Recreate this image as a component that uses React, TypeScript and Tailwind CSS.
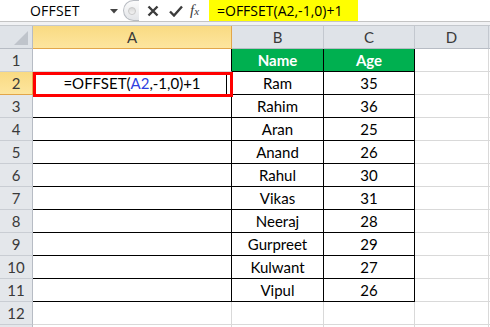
import React from "react";

type Row = { n: number; b?: string; c?: string; head?: boolean };

const rows: Row[] = [
  { n: 1, b: "Name", c: "Age", head: true },
  { n: 2, b: "Ram", c: "35" },
  { n: 3, b: "Rahim", c: "36" },
  { n: 4, b: "Aran", c: "25" },
  { n: 5, b: "Anand", c: "26" },
  { n: 6, b: "Rahul", c: "30" },
  { n: 7, b: "Vikas", c: "31" },
  { n: 8, b: "Neeraj", c: "28" },
  { n: 9, b: "Gurpreet", c: "29" },
  { n: 10, b: "Kulwant", c: "27" },
  { n: 11, b: "Vipul", c: "26" },
  { n: 12 },
  { n: 13 },
];

const hdr =
  "flex items-center justify-center h-[23px] border-r border-b border-r-[#c3c8cf] border-b-[#b7bcc4] bg-[#dfe3e8] text-[#3a3a3a] text-[15px]";
const hdrSel =
  "flex items-center justify-center h-[23px] border-r border-b border-r-[#e2a64a] border-b-[#e2a64a] bg-gradient-to-b from-[#f9da82] to-[#fde59e] text-[#3a3a3a] text-[15px]";

export default function App() {
  return (
    <div className="relative w-[490px] h-[327px] overflow-hidden bg-white font-['Lato',sans-serif] text-black">
      {/* formula bar */}
      <div className="flex h-[22px] border-b border-[#c4c4c4] font-['Open_Sans',sans-serif]">
        <div className="w-[123px] flex items-center pl-[30px] pr-[5px] text-[14px] text-black">
          <span className="flex-1 tracking-[0.2px]">OFFSET</span>
          <svg width="8" height="5" viewBox="0 0 8 5" className="mt-[2px]">
            <path d="M0 0 L8 0 L4 4.5 Z" fill="#444" />
          </svg>
        </div>
        <div className="w-[16px] h-[21px] rounded-l-full border border-r-0 border-[#b8bcc2] bg-gradient-to-b from-[#fbfbfb] to-[#e3e5e8] flex items-center justify-center">
          <div className="w-[8px] h-[8px] rounded-full bg-gradient-to-b from-[#d8d8d8] to-[#f4f4f4] border border-[#c8c8c8]" />
        </div>
        <div className="w-[70px] flex items-center">
          <svg width="12" height="12" viewBox="0 0 12 12" className="ml-[8px]">
            <path d="M1.5 1.5 L10.5 10.5 M10.5 1.5 L1.5 10.5" stroke="#3c3c3c" strokeWidth="2.4" strokeLinecap="butt" />
          </svg>
          <svg width="14" height="12" viewBox="0 0 14 12" className="ml-[10px]">
            <path d="M1 6.5 L5 10.5 L13 1.5" stroke="#3c3c3c" strokeWidth="2.4" fill="none" />
          </svg>
          <span className="ml-[7px] font-['Liberation_Serif',serif] italic text-[15px] text-[#3c3c3c] leading-none">
            f<span className="text-[11px]">x</span>
          </span>
        </div>
        <div className="w-[149px] bg-[#ffff00] flex items-center pl-[8px] text-[14px] text-black">
          =OFFSET(A2,-1,0)+1
        </div>
        <div className="flex-1" />
      </div>
      <div className="h-[4px] bg-[#f1f2f4] border-b border-[#c4c8cd]" />

      {/* grid */}
      <div className="relative grid grid-cols-[33px_199px_92px_91px_74px_1fr]">
        {/* column headers */}
        <div className="relative h-[23px] border-r border-b border-[#b7bcc4] bg-[#dfe3e8]">
          <svg width="14" height="14" viewBox="0 0 14 14" className="absolute right-[4px] bottom-[3px]">
            <path d="M14 0 L14 14 L0 14 Z" fill="#bfc4cb" />
          </svg>
        </div>
        <div className={hdrSel}>A</div>
        <div className={hdr}>B</div>
        <div className={hdr}>C</div>
        <div className={hdr}>D</div>
        <div className="h-[23px] border-b border-[#b7bcc4] bg-[#dfe3e8]" />

        {rows.map((r) => {
          const inTable = r.n <= 11;
          const aBottomBlack = r.n >= 2 && r.n <= 11;
          return (
            <React.Fragment key={r.n}>
              <div
                className={
                  r.n === 2
                    ? "flex items-center justify-center h-[23px] border-r border-b border-r-[#e2a64a] border-b-[#e2a64a] bg-gradient-to-b from-[#f9da82] to-[#fde59e] text-[#3a3a3a] text-[15px]"
                    : "flex items-center justify-center h-[23px] border-r border-b border-r-[#b7bcc4] border-b-[#c9cdd3] bg-[#e4e7eb] text-[#3a3a3a] text-[15px]"
                }
              >
                {r.n <= 12 ? r.n : null}
              </div>
              <div
                className={
                  "flex items-center justify-center h-[23px] border-r border-b text-[15px] " +
                  (inTable ? "border-r-black " : "border-r-[#d9d9d9] ") +
                  (aBottomBlack ? "border-b-black" : "border-b-[#d9d9d9]")
                }
              >
                {r.n === 2 ? (
                  <span>
                    =OFFSET(<span className="text-[#2f3fe0]">A2</span>,-1,0)+1
                  </span>
                ) : null}
              </div>
              <div
                className={
                  inTable
                    ? r.head
                      ? "flex items-center justify-center h-[23px] border-r border-b border-black bg-[#00b050] text-white font-bold text-[15px]"
                      : "flex items-center justify-center h-[23px] border-r border-b border-black text-[15px]"
                    : "h-[23px] border-r border-b border-[#d9d9d9]"
                }
              >
                {r.b}
              </div>
              <div
                className={
                  inTable
                    ? r.head
                      ? "flex items-center justify-center h-[23px] border-r border-b border-black bg-[#00b050] text-white font-bold text-[15px]"
                      : "flex items-center justify-center h-[23px] border-r border-b border-black text-[15px]"
                    : "h-[23px] border-r border-b border-[#d9d9d9]"
                }
              >
                {r.c}
              </div>
              <div className="h-[23px] border-r border-b border-[#d9d9d9]" />
              <div className="h-[23px] border-b border-[#d9d9d9]" />
            </React.Fragment>
          );
        })}

        {/* selected cell outline */}
        <div className="absolute left-[33px] top-[46px] w-[200px] h-[25px] border-[3px] border-[#ff0000] pointer-events-none">
          <div className="absolute right-[3px] top-0 bottom-0 w-px bg-black" />
        </div>
      </div>
    </div>
  );
}
